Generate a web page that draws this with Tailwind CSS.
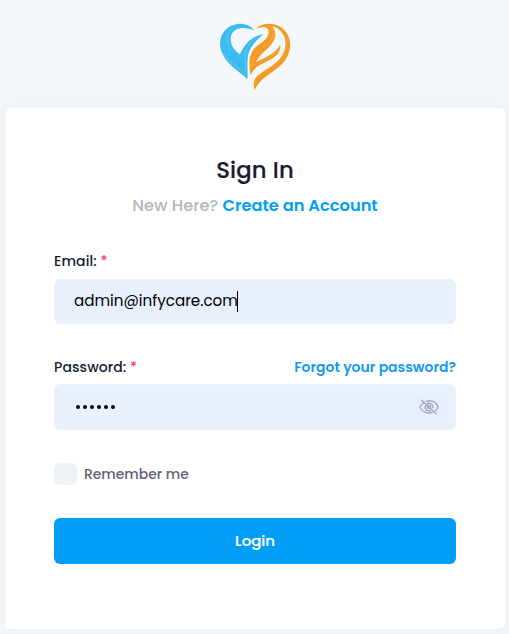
<!DOCTYPE html>
<html lang="en">
<head>
<meta charset="utf-8">
<title>Sign In</title>
<script src="https://cdn.jsdelivr.net/npm/@tailwindcss/browser@4"></script>
</head>
<body class="h-[634px] overflow-hidden bg-[#f4f8fb] font-['Poppins','Inter',sans-serif] font-medium whitespace-nowrap">
<main class="flex flex-col px-[5px] pr-1 pt-[22px]">
  <svg class="ml-[214px] h-[69px] w-[72px]" viewBox="27 24 216 207" fill="none" aria-label="InfyCare">
    <path d="M132 48C118 30 91 24 67 34C41 44 27 70 31 98C35 128 58 151 83 171C95 180 104 188 112 196C115 168 109 144 115 121C121 97 139 79 160 61C128 66 103 88 90 121C71 108 61 92 62 73C64 46 91 33 132 48Z" fill="#3bbcf1"/>
    <path d="M72 39C50 55 45 85 62 110M40 118C58 148 87 156 105 182" stroke="#74d0f6" stroke-width="2"/>
    <path d="M136 75C112 90 104 110 105 140L109 176" stroke="#70cff5" stroke-width="2"/>
    <path d="M138 45C152 29 182 24 206 36C234 50 246 80 238 111C230 143 207 160 181 178C158 194 144 208 134 228C128 212 130 197 144 184C163 167 189 157 207 137C226 116 234 82 217 58C208 45 199 40 187 37C200 54 199 75 182 94C167 111 149 122 138 145C166 130 196 119 211 92C213 126 182 136 155 150C139 158 128 168 122 184C117 158 115 127 130 107C146 86 176 80 176 53C176 38 156 37 138 45Z" fill="#f59a22"/>
    <path d="M186 42C196 64 184 82 160 99C138 114 127 130 124 160M202 111C184 131 152 136 131 158" stroke="#f9ba66" stroke-width="1.5"/>
    <path d="M225 62C240 94 223 130 190 153" stroke="#f8b35a" stroke-width="1.5"/>
  </svg>
  <section class="mt-[17px] flex h-[521px] flex-col rounded-md bg-white px-[49px] shadow-[0_0_12px_3px_rgba(76,87,125,0.035)]">
    <h1 class="mt-[45px] h-[34px] text-center text-[22.75px] leading-[34px] tracking-[0.15px] text-[#181c32] [-webkit-text-stroke:0.2px_#181c32]">Sign In</h1>
    <p class="mt-[6px] h-[26px] text-center text-[16.25px] leading-[26px] text-[#b5b5c3]"><span>New Here?</span> <a class="font-semibold text-[#009ef7]">Create an Account</a></p>
    <label class="mt-8 h-5 text-[14px] leading-5 tracking-[0.09px] text-[#181c32]"><span>Email:</span> <span class="text-[#f1416c]">*</span></label>
    <div class="mt-2 flex h-[45px] items-center rounded-md border border-[#eff2f5] bg-[#e8f0fe] pl-[19px] text-[15.15px] font-normal text-black"><span>admin@infycare.com</span><i class="-ml-px h-[21px] w-px bg-black"></i></div>
    <div class="mt-[33px] flex h-5 justify-between text-[14px] leading-5">
      <label class="tracking-[0.09px] text-[#181c32]"><span>Password:</span> <span class="text-[#f1416c]">*</span></label>
      <a class="text-[13.95px] font-semibold text-[#1599f3]">Forgot your password?</a>
    </div>
    <div class="mt-[7px] flex h-[46px] items-center justify-between rounded-md border border-[#eff2f5] bg-[#e8f0fe] pl-[20.5px] pr-4">
      <div class="flex gap-[3px]" aria-label="Password"><i class="size-1 rounded-full bg-black"></i><i class="size-1 rounded-full bg-black"></i><i class="size-1 rounded-full bg-black"></i><i class="size-1 rounded-full bg-black"></i><i class="size-1 rounded-full bg-black"></i><i class="size-1 rounded-full bg-black"></i></div>
      <svg class="h-4 w-5" viewBox="0 0 20 16" fill="none" stroke="#a5aabd" stroke-width="1.4"><path d="M6 3C3.5 4 1.8 6 .8 8C2.3 11 5.4 14 10 14C11.4 14 12.7 13.7 13.8 13.2M7 2.4C12.5.8 17 3 19.2 8C18.5 9.5 17.4 11 16 12M7 5.8C5 8.5 6.8 12 10 12C10.8 12 11.4 11.8 12 11.4M8 4.7C11.8 3.2 15 6 13.9 9.3M8.5 7C8.2 8.7 9 9.6 10.5 9.6M9.3 6.2C11 6 12 7 11.9 8.5M2.2.8L17.8 15.2"/></svg>
    </div>
    <label class="mt-[33px] flex h-[22px] items-center gap-[7px] text-[13.9px] text-[#5e6278]"><i class="h-[22px] w-[23px] rounded-md bg-[#eff3f6]"></i><span>Remember me</span></label>
    <button class="mt-[33px] h-[46px] w-full rounded-md bg-[#009ef7] text-[14.95px] text-white [-webkit-text-stroke:0.2px_white]">Login</button>
  </section>
</main>
</body>
</html>
